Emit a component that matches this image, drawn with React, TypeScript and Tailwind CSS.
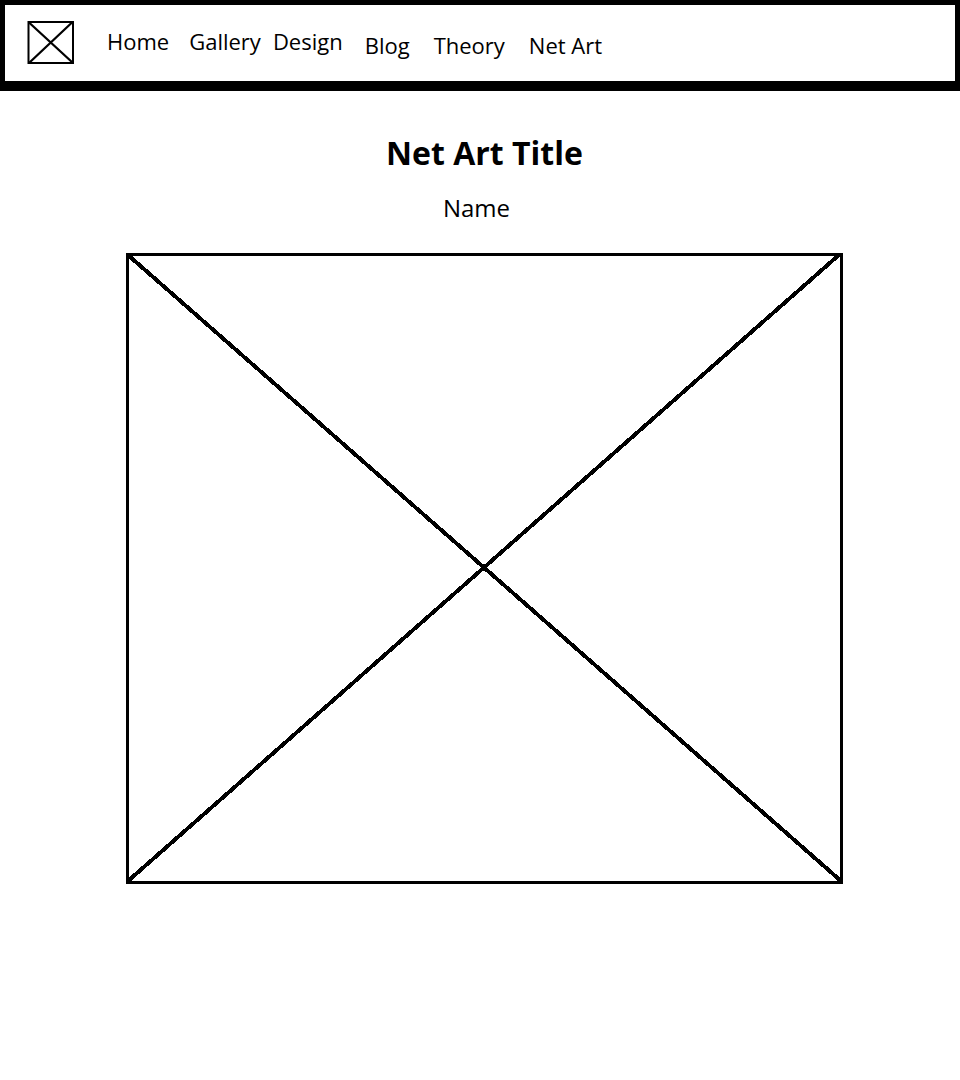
const primaryLinks = [
  { label: "Home", spacing: "ml-0" },
  { label: "Gallery", spacing: "ml-5" },
  { label: "Design", spacing: "ml-3" },
];

const secondaryLinks = [
  { label: "Blog", spacing: "ml-0" },
  { label: "Theory", spacing: "ml-6" },
  { label: "Net Art", spacing: "ml-6" },
];

type NavLink = { label: string; spacing: string };

function NavGroup({ links }: { links: NavLink[] }) {
  return (
    <ul className="flex text-[22px] leading-8">
      {links.map(({ label, spacing }) => (
        <li key={label} className={spacing}>
          <a href="#" className="whitespace-nowrap">
            {label}
          </a>
        </li>
      ))}
    </ul>
  );
}

export default function App() {
  return (
    <div className="min-h-screen bg-white font-['Open_Sans','Noto_Sans',sans-serif] text-black">
      <header className="flex items-start border-x-[5px] border-t-[5px] border-b-[10px] border-black pt-4 pb-4 pl-[22px]">
        <a href="#" aria-label="Site logo" className="shrink-0">
          <svg width="48" height="44" viewBox="0 0 48 44" fill="none" stroke="black" strokeWidth="2">
            <path d="M1.5 1H46V42H1.500Z" />
            <path d="M2 1.500L46 42M45 1.500L2 42" strokeWidth="2.300" />
          </svg>
        </a>
        <nav aria-label="Main" className="flex items-start pl-8">
          <div className="pt-1">
            <NavGroup links={primaryLinks} />
          </div>
          <div className="pt-2 pl-[22px]">
            <NavGroup links={secondaryLinks} />
          </div>
        </nav>
      </header>
      <main className="pt-10 pr-[117px] pl-[126px]">
        <h1 className="text-center text-[32px] leading-[44px] font-bold">Net Art Title</h1>
        <p className="pt-[17px] pr-4 text-center text-2xl">Name</p>
        <svg
          role="img"
          aria-label="Artwork placeholder"
          viewBox="0 0 717 631"
          className="mt-[29px] block h-auto w-full"
          fill="none"
          stroke="black"
          shapeRendering="crispEdges"
        >
          <path d="M1.500 1.500H715.500V629.500H1.500Z" strokeWidth="3" />
          <path d="M2 2L715 628M714 1L2 628" strokeWidth="4" />
        </svg>
      </main>
    </div>
  );
}
